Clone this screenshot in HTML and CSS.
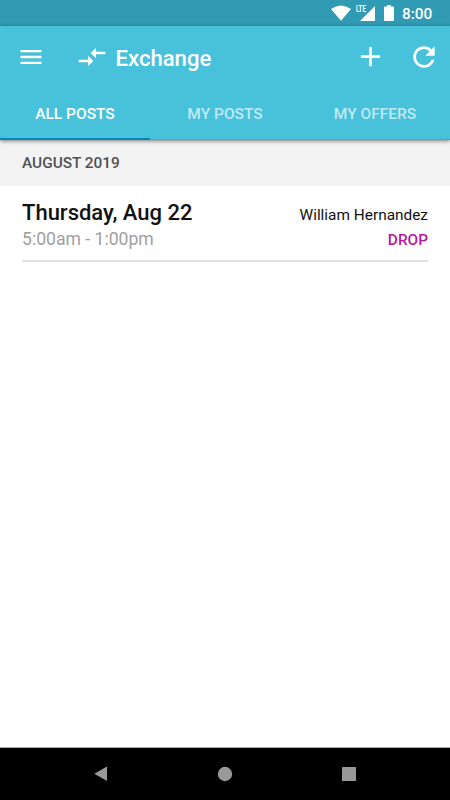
FILE: index.html
```html
<!DOCTYPE html>
<html lang="en">
<head>
<meta charset="utf-8">
<title>Exchange</title>
<link rel="stylesheet" href="styles.css">
</head>
<body>
<div class="status">
  <svg class="wifi" width="20" height="16" viewBox="0 0 20 16"><path d="M0 4Q10-3.2 20 4L10 15.7Z"/></svg>
  <span class="signal"><svg width="15" height="15" viewBox="0 0 15 15"><path d="M15 0V15H0L7 8V7.5H7.5Z"/></svg><span class="lte">LTE</span></span>
  <svg class="battery" width="10" height="16" viewBox="0 0 10 16"><path d="M3 0H7V1.6H9Q10 1.6 10 2.6V15Q10 16 9 16H1Q0 16 0 15V2.6Q0 1.6 1 1.6H3Z"/></svg>
  <span class="time">8:00</span>
</div>
<header class="appbar">
  <div class="toolbar">
    <svg class="menu" width="28" height="28" viewBox="0 0 24 24"><path d="M3 18h18v-2H3v2zm0-5h18v-2H3v2zm0-7v2h18V6H3z"/></svg>
    <svg class="compare" width="32" height="32" viewBox="0 0 24 24"><path d="M9.01 14H2v2h7.01v3L13 15l-3.99-4v3zm5.98-1v-3H22V8h-7.01V5L11 9l3.99 4z"/></svg>
    <h1>Exchange</h1>
    <svg class="add" width="33" height="33" viewBox="0 0 24 24"><path d="M19 13h-6v6h-2v-6H5v-2h6V5h2v6h6v2z"/></svg>
    <svg class="refresh" width="32" height="32" viewBox="0 0 24 24"><path d="M17.65 6.35C16.2 4.9 14.21 4 12 4c-4.42 0-7.99 3.58-7.99 8s3.57 8 7.99 8c3.73 0 6.84-2.55 7.73-6h-2.08c-.82 2.33-3.04 4-5.65 4-3.31 0-6-2.69-6-6s2.69-6 6-6c1.66 0 3.14.69 4.22 1.78L13 11h7V4l-2.35 2.35z"/></svg>
  </div>
  <nav class="tabs">
    <a class="tab active">ALL POSTS</a>
    <a class="tab">MY POSTS</a>
    <a class="tab">MY OFFERS</a>
  </nav>
</header>
<main>
  <h2 class="month">AUGUST 2019</h2>
  <article class="post">
    <div>
      <div class="date">Thursday, Aug 22</div>
      <div class="hours">5:00am - 1:00pm</div>
    </div>
    <div class="right">
      <div class="name">William Hernandez</div>
      <div class="drop">DROP</div>
    </div>
  </article>
</main>
<footer class="navbar">
  <svg width="14" height="16" viewBox="0 0 14 16"><path d="M13 .5V15L.3 7.8Z"/></svg>
  <svg width="16" height="16" viewBox="0 0 16 16"><circle cx="8" cy="8" r="7.2"/></svg>
  <svg width="14" height="14" viewBox="0 0 14 14"><rect width="14" height="14" rx=".6"/></svg>
</footer>
</body>
</html>
```
FILE: styles.css
```css
* { box-sizing: border-box; }
body {
  margin: 0;
  height: 800px;
  display: flex;
  flex-direction: column;
  font-family: Roboto, sans-serif;
  background: #fff;
  overflow: hidden;
}
svg { display: block; flex: none; fill: #fff; }
.status {
  height: 26px;
  flex: none;
  display: flex;
  align-items: flex-start;
  padding: 5px 17px 0 0;
  justify-content: flex-end;
  background: #319bb4;
  color: #fff;
}
.signal { position: relative; margin: 1px 9px 0; }
.lte {
  position: absolute;
  left: -4px;
  top: -2px;
  font-size: 9.5px;
  line-height: 10px;
  font-weight: 700;
  transform: scaleX(.64);
  transform-origin: left;
}
.battery { margin-right: 8px; }
.time { font-size: 15.4px; line-height: 18px; font-weight: 500; width: 31px; }
.appbar {
  height: 114px;
  flex: none;
  position: relative;
  background: #48c1db;
  box-shadow: 0 1px 4px rgba(0, 0, 0, .5);
}
.toolbar {
  height: 61px;
  display: flex;
  align-items: center;
  padding: 0 10px 0 16.5px;
}
.compare { margin-left: 31px; }
h1 {
  flex: 1;
  margin: 3px 0 0 8px;
  color: #fff;
  font-size: 22.1px;
  line-height: 28px;
  font-weight: 500;
}
.add { margin-right: 21px; }
.tabs { display: grid; grid-template-columns: repeat(3, 1fr); height: 53px; }
.tab {
  padding-top: 17px;
  text-align: center;
  font-size: 15.5px;
  line-height: 21px;
  font-weight: 500;
  color: #c0eaf3;
  border-bottom: 1px solid #25b5d3;
}
.active { color: #fff; border-bottom: 2px solid #0288c0; }
main { flex: 1; }
.month {
  margin: 0;
  height: 46px;
  padding-left: 22px;
  background: #f3f3f3;
  color: #505050;
  font-size: 15.4px;
  line-height: 47px;
  font-weight: 500;
}
.post {
  display: flex;
  justify-content: space-between;
  height: 76px;
  margin: 0 22px;
  padding-top: 13px;
  border-bottom: 2px solid #e0e0e0;
}
.date { font-size: 22px; line-height: 28px; font-weight: 500; color: #111; }
.hours { font-size: 17.6px; line-height: 24px; color: #a0a0a0; }
.right { text-align: right; }
.name { font-size: 15.4px; line-height: 24px; margin-top: 4px; color: #111; }
.drop { font-size: 15.4px; line-height: 24px; font-weight: 500; color: #b5179e; margin-top: 1px; }
.navbar {
  height: 53px;
  flex: none;
  display: flex;
  align-items: center;
  justify-content: space-between;
  padding: 0 94px;
  background: #000;
  border-top: 1px solid #aaa;
}
.navbar svg { fill: #999; }
```
